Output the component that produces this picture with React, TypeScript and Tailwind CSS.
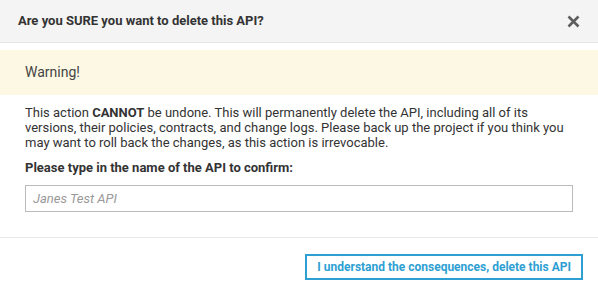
export default function App() {
  return (
    <div className="w-[598px] h-[295px] bg-white text-[#333] font-['Roboto',sans-serif]">
      <div className="h-[43px] bg-[#f4f4f4] border-b border-[#e5e5e5] flex items-center justify-between pl-[18px] pr-[18px]">
        <div className="text-[13px] font-bold text-[#333]">Are you SURE you want to delete this API?</div>
        <svg width="13" height="13" viewBox="0 0 13 13" className="mt-[1px]">
          <path d="M1.5 1.5 L11.5 11.5 M11.5 1.5 L1.5 11.5" stroke="#5e5e5e" strokeWidth="2.6" strokeLinecap="butt" />
        </svg>
      </div>
      <div className="pt-[7px]">
        <div className="h-[45px] bg-[#fcf8e3] flex items-center px-[25px] text-[14px] text-[#444]">Warning!</div>
        <div className="px-[25px]">
          <p className="mt-[10px] text-[13px] leading-[15px] text-[#333]">
            This action <span className="font-bold">CANNOT</span> be undone. This will permanently delete the API, including all of its versions, their policies, contracts, and change logs. Please back up the project if you think you may want to roll back the changes, as this action is irrevocable.
          </p>
          <div className="mt-[10px] text-[13px] leading-[15px] font-bold text-[#333]">Please type in the name of the API to confirm:</div>
          <input
            className="mt-[10px] block w-[548px] h-[27px] border border-[#bbb] px-[7px] text-[13px] outline-none placeholder:italic placeholder:text-[#999]"
            placeholder="Janes Test API"
          />
        </div>
        <div className="mt-[25px] border-t border-[#e8e8e8] flex justify-end pr-[15px] pt-[16px]">
          <button className="h-[26px] px-[10px] border-2 border-[#2e9fd3] text-[#2e9fd3] text-[12px] font-bold">
            I understand the consequences, delete this API
          </button>
        </div>
      </div>
    </div>
  );
}
